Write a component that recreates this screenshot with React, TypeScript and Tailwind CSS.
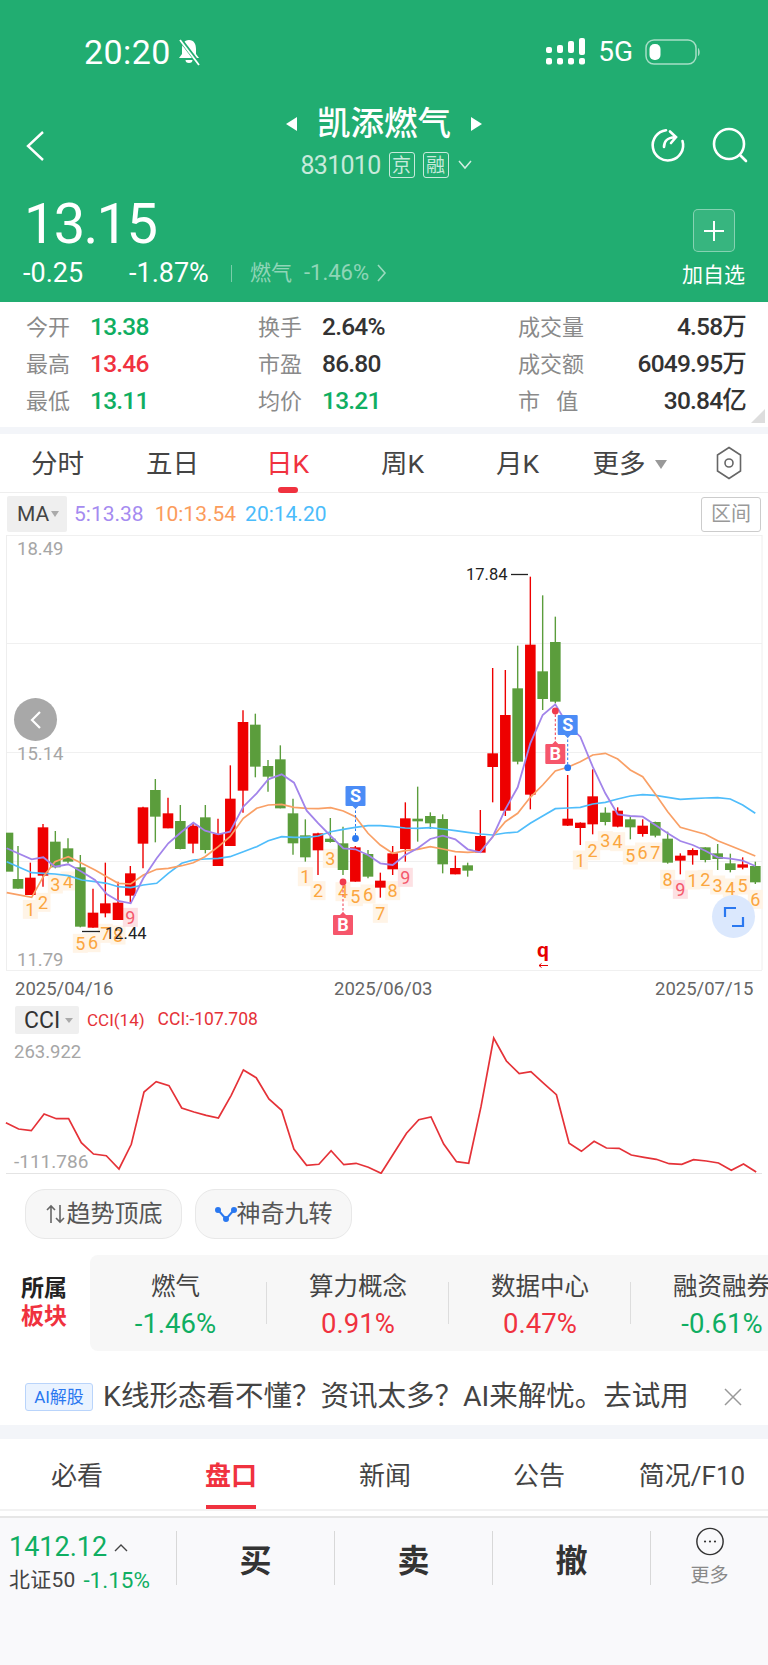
import React from "react";

type C = [number, number, number, number, number, "r" | "g"];
const Z4 = 1152;
const c3: C[] = [
  [24,908,1025,908,1025,"g"],[54,948,1076,1047,1076,"g"],[91,998,1095,1043,1095,"r"],[129,882,1070,892,1037,"r"],[166,903,1015,935,1012,"g"],[204,925,1000,955,995,"g"],[241,975,1192,1012,1190,"g"],[279,1076,1193,1148,1193,"r"],[316,998,1162,1120,1150,"r"],[354,1055,1170,1118,1170,"r"],[391,1008,1118,1030,1097,"r"],[429,830,1015,832,941,"r"],[466,747,937,780,860,"g"],[504,803,895,850,895,"r"],[541,825,958,873,957,"g"],[579,880,970,887,941,"r"],[616,825,970,862,960,"g"],[654,866,1008,912,1008,"r"],[691,706,948,806,948,"r"],[729,541,848,576,782,"r"],[766,551,742,584,710,"g"],[804,690,785,708,740,"g"],[841,646,835,688,835,"g"],[879,806,974,850,940,"g"],[916,868,995,916,982,"g"],[954,908,1035,910,961,"r"],[991,864,938,926,936,"g"],[1029,890,1035,940,1020,"g"],[1066,948,1055,952,1055,"r"],[1104,960,1045,972,1040,"g"],[1141,1028,1103,1052,1073,"r"],
];
const c4: C[] = [
  [26,948,1035,970,1018,"r"],[64,817,995,865,957,"r"],[101,770,935,866,874,"g"],[139,847,897,858,880,"g"],[176,853,1030,867,1003,"g"],[214,977,1033,1014,1033,"r"],[251,998,1040,1006,1022,"g"],[289,840,968,918,968,"r"],[326,414,817,670,711,"r"],[364,420,858,555,842,"r"],[401,347,703,475,695,"g"],[439,140,838,344,794,"r"],[476,196,540,424,507,"g"],[514,260,520,336,515,"g"],[551,735,888,866,887,"r"],[589,877,945,878,894,"r"],[626,718,913,799,883,"r"],[664,832,886,848,876,"g"],[701,832,892,842,890,"r"],[739,860,928,868,892,"g"],[776,868,920,887,912,"r"],[814,875,922,876,917,"g"],[851,905,1001,926,998,"g"],[889,970,1033,977,992,"r"],[926,955,1004,960,976,"r"],[964,952,997,952,990,"g"],[1001,942,1020,970,987,"g"],[1039,971,1027,1000,1020,"g"],[1076,982,1018,1003,1013,"r"],[1114,995,1062,1008,1057,"g"],
];
const candles: C[] = [...c3, ...c4.map((c) => [c[0] + Z4, c[1], c[2], c[3], c[4], c[5]] as C)];

const px = (z: number) => z / 3;
const py = (z: number) => z / 3 - 5;
const line = (a: number[], b: number[]) => {
  const all = [...a, ...b.map((v, i) => (i % 2 === 0 ? v + Z4 : v))];
  const out: string[] = [];
  for (let i = 0; i < all.length; i += 2) out.push(`${px(all[i]).toFixed(1)},${py(all[i + 1]).toFixed(1)}`);
  return out.join(" ");
};

const purple = line(
  [20,955,95,988,130,982,165,1010,205,1003,245,1025,285,1050,320,1092,355,1113,392,1120,430,1045,470,985,505,940,545,905,580,878,615,902,655,913,690,905,730,830,770,790,805,748,845,733,882,758,920,842,955,880,992,918,1030,955,1066,958,1104,975,1141,1000],
  [26,1005,64,975,101,955,139,927,176,917,214,928,251,958,289,967,326,920,364,838,401,772,439,640,476,555,514,523,551,585,589,620,626,710,664,790,701,853,739,858,776,860,814,885,851,910,889,933,926,945,964,962,1001,982,1039,986,1076,992,1114,1008]
);
const orange = line(
  [20,1088,95,1102,130,1040,165,995,205,980,245,1000,285,1020,320,1040,355,1060,392,1062,430,1035,470,1018,505,1015,545,1007,580,998,615,980,655,950,690,920,730,865,770,835,805,825,845,823,882,832,920,835,955,836,992,833,1030,843,1066,860,1104,910,1141,945],
  [26,970,64,962,101,958,139,950,176,957,214,965,251,967,289,965,326,920,364,875,401,850,439,802,476,765,514,723,551,712,589,695,626,675,664,670,701,687,739,720,776,740,814,792,851,845,889,892,926,902,964,913,1001,932,1039,947,1076,962,1114,978]
);
const blue = line(
  [20,995,95,1028,130,1030,165,1032,205,1037,245,1050,285,1055,320,1060,355,1070,392,1073,430,1065,470,1060,505,1030,545,1000,580,990,615,987,655,985,690,980,730,965,770,950,805,932,845,920,882,922,920,922,955,918,992,905,1030,898,1066,892,1104,887,1141,887],
  [26,890,64,894,101,895,139,893,176,897,214,902,251,907,289,912,326,915,364,909,401,906,439,880,476,858,514,836,551,834,589,832,626,822,664,817,701,807,739,798,776,794,814,796,851,802,889,808,926,806,964,804,1001,803,1039,807,1076,825,1114,850]
);

const seq: [string, number, number][] = [
  ["1",91,1138],["2",129,1117],["3",166,1062],["4",204,1053],["5",241,1240],["6",279,1238],["7",316,1210],["8",354,1215],["9",391,1162],
  ["1",916,1040],["2",954,1082],["3",991,985],["4",1029,1085],["5",1066,1100],["6",1104,1092],["7",1141,1150],["8",26+Z4,1082],["9",64+Z4,1042],
  ["1",589+Z4,990],["2",626+Z4,962],["3",664+Z4,932],["4",701+Z4,935],["5",739+Z4,975],["6",776+Z4,966],["7",814+Z4,966],["8",851+Z4,1048],["9",889+Z4,1078],
  ["1",926+Z4,1050],["2",964+Z4,1048],["3",1001+Z4,1065],["4",1039+Z4,1074],["5",1076+Z4,1065],["6",1114+Z4,1108],
];

const cciPts: number[] = [12,398,38,417,64,422,90,372,115,386,140,386,166,458,191,492,217,497,243,537,268,463,294,306,319,275,345,287,371,354,396,366,421,376,446,384,472,316,497,240,523,263,549,327,575,361,600,477,626,526,651,523,676,482,702,524,727,520,752,532,778,550,804,490,830,430,855,389,880,381,906,462,932,515,957,520,982,350,1008,144,1034,213,1060,251,1084,245,1110,280,1136,314,1162,460,1187,484,1213,454,1238,474,1264,475,1289,495,1315,502,1340,508,1366,521,1392,523,1416,509,1442,513,1467,519,1493,541,1518,522,1544,546];
const cci = (() => {
  const o: string[] = [];
  for (let i = 0; i < cciPts.length; i += 2) o.push(`${(cciPts[i] / 2.0417).toFixed(1)},${(cciPts[i + 1] / 3 - 12).toFixed(1)}`);
  return o.join(" ");
})();

function Marker({ kind, x, y, dx, dy }: { kind: "S" | "B"; x: number; y: number; dx: number; dy: number }) {
  const col = kind === "S" ? "#4b8cf6" : "#f6566b";
  const dot = kind === "S" ? "#2a78f0" : "#f03a4c";
  const up = kind === "B";
  return (
    <g>
      <line x1={x} x2={dx} y1={up ? y : y + 20} y2={dy} stroke={dot} strokeWidth="1" strokeDasharray="2.5 2" />
      <circle cx={dx} cy={dy} r="3.4" fill={dot} />
      <rect x={x - 10} y={y} width="20" height="20" rx="1" fill={col} />
      <polygon points={up ? `${x - 3},${y} ${x + 3},${y} ${x},${y - 3}` : `${x - 3},${y + 20} ${x + 3},${y + 20} ${x},${y + 23}`} fill={col} />
      <text x={x} y={y + 16} textAnchor="middle" fontSize="18" fontWeight="700" fill="#fff">{kind}</text>
    </g>
  );
}

function KChart() {
  return (
    <svg width="768" height="467" viewBox="0 0 768 467" className="block">
      {[0, 108, 217, 326, 435].map((y) => (
        <line key={y} x1="6" x2="762" y1={y + 0.5} y2={y + 0.5} stroke="#f0f0f0" strokeWidth="1" />
      ))}
      <line x1="6.5" x2="6.5" y1="0" y2="435" stroke="#eeeeee" />
      <line x1="762" x2="762" y1="0" y2="435" stroke="#eeeeee" />
      <g fontSize="18.5" fill="#a6a6a6">
        <text x="17" y="20">18.49</text>
        <text x="17" y="225">15.14</text>
        <text x="17" y="431">11.79</text>
      </g>
      {seq.map(([t, x, y], i) => {
        const pink = t === "9";
        return (
          <g key={i}>
            <rect x={px(x) - 7.5} y={py(y) - 9.5} width="15" height="19" fill={pink ? "#fde0e3" : "#fff4e6"} />
            <text x={px(x)} y={py(y) + 6.5} textAnchor="middle" fontSize="18" fill={pink ? "#f4596c" : "#fba63f"}>{t}</text>
          </g>
        );
      })}
      {candles.map(([x, wt, wb, bt, bb, c], i) => {
        const col = c === "r" ? "#ee0000" : "#5b9d3c";
        const l = Math.max(px(x) - 5.3, 6);
        const r = px(x) + 5.3;
        return (
          <g key={i}>
            {i > 0 && <line x1={px(x)} x2={px(x)} y1={py(wt)} y2={py(wb)} stroke={col} strokeWidth="1.4" />}
            <rect x={l} y={py(bt)} width={r - l} height={Math.max(py(bb) - py(bt), 2)} fill={col} />
          </g>
        );
      })}
      <polyline points={blue} fill="none" stroke="#4fbdfb" strokeWidth="1.7" />
      <polyline points={orange} fill="none" stroke="#f9a066" strokeWidth="1.7" />
      <polyline points={purple} fill="none" stroke="#a284ea" strokeWidth="1.8" />
      <Marker kind="S" x={355.5} y={251} dx={355.5} dy={303.5} />
      <Marker kind="B" x={343} y={380} dx={343} dy={347} />
      <Marker kind="B" x={555.3} y={209} dx={555.3} dy={176} />
      <Marker kind="S" x={567.7} y={180} dx={567.7} dy={232.7} />
      <text x="466" y="45" fontSize="16.5" fill="#222">17.84</text>
      <line x1="511" x2="528" y1="39.5" y2="39.5" stroke="#222" strokeWidth="1.3" />
      <line x1="82" x2="100" y1="396.5" y2="396.5" stroke="#222" strokeWidth="1.3" />
      <text x="105" y="404" fontSize="16.5" fill="#222">12.44</text>
      <text x="543" y="422" textAnchor="middle" fontSize="21" fontWeight="700" fill="#e60000">q</text>
      <path d="M548 430.5H539M539 430.5l2.5-2M539 430.5l2.5 2" fill="none" stroke="#e60000" strokeWidth="1" />
      <g fontSize="18.5" fill="#666">
        <text x="15" y="460">2025/04/16</text>
        <text x="334" y="460">2025/06/03</text>
        <text x="655" y="460">2025/07/15</text>
      </g>
    </svg>
  );
}

function Signal() {
  const tops = [[47, 53], [45, 53], [41, 53], [38, 55]];
  return (
    <svg width="42" height="30" viewBox="0 0 42 30" className="block">
      {tops.map(([a, b], i) => (
        <g key={i} fill="#fff">
          <rect x={1 + i * 11} y={a - 37} width="6" height={b - a} rx="2" />
          <rect x={1 + i * 11} y="21" width="6" height="6.5" rx="2" />
        </g>
      ))}
    </svg>
  );
}

function Stat({ label, value, color, right }: { label: string; value: string; color: string; right?: boolean }) {
  return (
    <div className={`flex items-center h-[37px] ${right ? "justify-between" : ""}`}>
      <span className="text-[22px] text-[#8a8a8a] whitespace-pre leading-none">{label}</span>
      <span className={`text-[24.5px] tracking-[-0.8px] font-medium leading-none ${right ? "" : "ml-[20px]"} ${color}`}>{value}</span>
    </div>
  );
}

export default function App() {
  return (
    <div className="w-[768px] h-[1665px] bg-white overflow-hidden font-['Roboto','Noto_Sans_CJK_SC',sans-serif]">
      <header className="h-[302px] bg-[#21ad71] text-white flex flex-col">
        <div className="h-[104px] flex items-center pl-[84px] pr-[67px]">
          <span className="text-[34px] leading-none tracking-[0.4px]">20:20</span>
          <svg width="28" height="28" viewBox="0 0 28 28" className="ml-[4px]" fill="#fff">
            <path d="M14 2c-5 0-7 4-7 9v5l-3 4h20l-3-4v-5c0-5-2-9-7-9z" />
            <path d="M10.5 22a3.5 3 0 0 0 7 0z" />
            <path d="M5 1l19 25" stroke="#21ad71" strokeWidth="4" />
            <path d="M5 2l19 25" stroke="#fff" strokeWidth="1.8" />
          </svg>
          <div className="ml-auto flex items-center">
            <Signal />
            <span className="text-[28px] leading-none ml-[11px]">5G</span>
            <svg width="56" height="26" viewBox="0 0 56 26" className="ml-[12px]">
              <rect x="1" y="1" width="50" height="24" rx="8" fill="none" stroke="#ffffff" strokeOpacity="0.6" strokeWidth="1.5" />
              <rect x="4.5" y="5" width="11" height="16" rx="5" fill="#fff" />
              <path d="M53 9c2 1 2.5 7 0 8z" fill="#fff" fillOpacity="0.6" />
            </svg>
          </div>
        </div>
        <div className="h-[80px] grid grid-cols-[1fr_auto_1fr]">
          <div className="pl-[24px] pt-[26px]">
            <svg width="22" height="32" viewBox="0 0 22 32" fill="none" stroke="#fff" strokeWidth="2.4">
              <path d="M19 2L4 16l15 14" />
            </svg>
          </div>
          <div className="flex flex-col items-center">
            <div className="flex items-center h-[40px] gap-[20px]">
              <span className="w-0 h-0 border-y-[7px] border-y-transparent border-r-[11px] border-r-white" />
              <span className="text-[33.5px] font-medium leading-none">凯添燃气</span>
              <span className="w-0 h-0 border-y-[7px] border-y-transparent border-l-[11px] border-l-white" />
            </div>
            <div className="flex items-center mt-[8px] pl-[5px] text-white/75">
              <span className="text-[25px] tracking-[-0.7px] leading-none">831010</span>
              <span className="ml-[8px] w-[26px] h-[26px] border border-white/75 rounded-[3px] text-[19px] leading-none flex items-center justify-center">京</span>
              <span className="ml-[8px] w-[26px] h-[26px] border border-white/75 rounded-[3px] text-[19px] leading-none flex items-center justify-center">融</span>
              <svg width="16" height="10" viewBox="0 0 16 10" className="ml-[8px]" fill="none" stroke="#fff" strokeOpacity="0.8" strokeWidth="1.5">
                <path d="M2 1l6 7 6-7" />
              </svg>
            </div>
          </div>
          <div className="flex justify-end items-start pt-[22px] pr-[19px] gap-[25px]">
            <svg width="38" height="38" viewBox="0 0 38 38" fill="none" stroke="#fff" strokeWidth="2.6" strokeLinecap="round">
              <path d="M18 4.2A15.2 15.2 0 1 0 34.5 15" />
              <path d="M16 21c0-6 3-9 11-10M22 5.5L28 11l-5 6" />
            </svg>
            <svg width="38" height="38" viewBox="0 0 38 38" fill="none" stroke="#fff" strokeWidth="2.6" strokeLinecap="round">
              <circle cx="18" cy="18" r="15" />
              <path d="M29 29l6 6" />
            </svg>
          </div>
        </div>
        <div className="flex-1 flex justify-between pl-[23px] pr-[23px]">
          <div className="flex flex-col">
            <div className="text-[56px] leading-none h-[60px] pl-[1px] pt-[12px] tracking-[-1.7px]">13.15</div>
            <div className="flex items-center mt-[14px] h-[30px] ">
              <span className="text-[27px] leading-none w-[106px]">-0.25</span>
              <span className="text-[27px] leading-none w-[102px]">-1.87%</span>
              <span className="w-px h-[17px] bg-white/40" />
              <span className="ml-[18px] text-[21px] leading-none text-white/50">燃气</span>
              <span className="ml-[12px] text-[22px] leading-none text-white/50">-1.46%</span>
              <svg width="10" height="18" viewBox="0 0 10 18" className="ml-[8px]" fill="none" stroke="#fff" strokeOpacity="0.55" strokeWidth="1.6">
                <path d="M1 1l7 8-7 8" />
              </svg>
            </div>
          </div>
          <div className="flex flex-col items-center pt-[25px]">
            <div className="w-[42px] h-[43px] rounded-[5px] bg-white/10 border border-white/40 flex items-center justify-center">
              <svg width="22" height="22" viewBox="0 0 22 22" stroke="#fff" strokeWidth="2">
                <path d="M11 1v20M1 11h20" />
              </svg>
            </div>
            <span className="text-[21px] leading-none mt-[13px]">加自选</span>
          </div>
        </div>
      </header>

      <section className="h-[125px] pt-[7px] pl-[26px] pr-[22px] grid grid-cols-[232px_260px_1fr] relative">
        <div>
          <Stat label="今开" value="13.38" color="text-[#0fae62]" />
          <Stat label="最高" value="13.46" color="text-[#f0323f]" />
          <Stat label="最低" value="13.11" color="text-[#0fae62]" />
        </div>
        <div>
          <Stat label="换手" value="2.64%" color="text-[#333]" />
          <Stat label="市盈" value="86.80" color="text-[#333]" />
          <Stat label="均价" value="13.21" color="text-[#0fae62]" />
        </div>
        <div>
          <Stat right label="成交量" value="4.58万" color="text-[#333]" />
          <Stat right label="成交额" value="6049.95万" color="text-[#333]" />
          <Stat right label={"市   值"} value="30.84亿" color="text-[#333]" />
        </div>
        <svg width="14" height="14" viewBox="0 0 14 14" className="absolute right-[3px] bottom-[4px]">
          <polygon points="14,0 14,14 0,14" fill="#dddddd" />
        </svg>
      </section>
      <div className="h-[7px] bg-[#f3f5f9]" />

      <nav className="h-[59px] flex items-center border-b border-[#eeeeee] relative text-[26.5px] text-[#444] pt-[3px]">
        <div className="w-[115px] text-center leading-none">分时</div>
        <div className="w-[115px] text-center leading-none">五日</div>
        <div className="w-[115px] -mt-[3px] pt-[3px] text-center leading-none text-[#f0323f] relative h-[59px] flex items-center justify-center">
          日K
          <span className="absolute left-[48px] bottom-0 w-[20px] h-[6px] rounded-full bg-[#f0323f]" />
        </div>
        <div className="w-[115px] text-center leading-none">周K</div>
        <div className="w-[115px] text-center leading-none">月K</div>
        <div className="w-[115px] flex items-center justify-center leading-none pr-[6px]">
          更多
          <span className="ml-[9px] w-0 h-0 border-x-[6.5px] border-x-transparent border-t-[9px] border-t-[#999]" />
        </div>
        <svg width="26" height="34" viewBox="0 0 26 34" className="ml-[26px] -mt-[3px]" fill="none" stroke="#666" strokeWidth="1.6">
          <path d="M13 1.5L24.5 9v16L13 32.5 1.5 25V9z" />
          <circle cx="13" cy="17" r="4" />
        </svg>
      </nav>

      <div className="h-[42px] flex items-center pl-[7px] pr-[7px] text-[21px]">
        <div className="w-[60px] h-[36px] bg-[#efefef] rounded-[2px] flex items-center pl-[10px] text-[#444] leading-none">
          MA
          <span className="ml-[2px] w-0 h-0 border-x-[4px] border-x-transparent border-t-[6px] border-t-[#aaa]" />
        </div>
        <span className="ml-[7px] text-[#a58bf0] leading-none">5:13.38</span>
        <span className="ml-[11px] text-[#fb9c5c] leading-none">10:13.54</span>
        <span className="ml-[9px] text-[#4bbcfb] leading-none">20:14.20</span>
        <div className="ml-auto w-[60px] h-[35px] border border-[#cccccc] rounded-[3px] flex items-center justify-center text-[20px] text-[#999] leading-none">区间</div>
      </div>

      <div className="relative h-[467px]">
        <KChart />
        <div className="absolute left-[14px] top-[163px] w-[43px] h-[43px] rounded-full bg-[#a8a8a8] flex items-center justify-center">
          <svg width="14" height="20" viewBox="0 0 14 20" fill="none" stroke="#fff" strokeWidth="2.2">
            <path d="M11 2L3 10l8 8" />
          </svg>
        </div>
        <div className="absolute left-[712px] top-[360px] w-[43px] h-[43px] rounded-full bg-[#dbe8fd] flex items-center justify-center">
          <svg width="22" height="22" viewBox="0 0 22 22" fill="none" stroke="#2a78f0" strokeWidth="2.2">
            <path d="M2 11V2h11M20 11v9H9" />
          </svg>
        </div>
      </div>

      <div className="relative h-[172px]">
        <svg width="768" height="172" viewBox="0 0 768 172" className="block">
          <line x1="6" x2="762" y1="171.5" y2="171.5" stroke="#e4e4e4" />
          <polyline points={cci} fill="none" stroke="#e53238" strokeWidth="1.7" />
          <text x="14" y="56" fontSize="18.5" fill="#a6a6a6">263.922</text>
          <text x="14" y="166" fontSize="19" fill="#a6a6a6">-111.786</text>
        </svg>
        <div className="absolute left-[15px] top-[4px] flex items-center">
          <div className="w-[64px] h-[28px] bg-[#efefef] rounded-[2px] flex items-center pl-[9px] text-[23px] text-[#333] leading-none">
            CCI
            <span className="ml-[5px] w-0 h-0 border-x-[4px] border-x-transparent border-t-[5px] border-t-[#aaa]" />
          </div>
          <span className="ml-[8px] text-[17px] text-[#e53238] leading-none">CCI(14)</span>
          <span className="ml-[13px] text-[17.5px] text-[#e53238] leading-none">CCI:-107.708</span>
        </div>
      </div>

      <div className="h-[81px] pt-[15px] pl-[25px] flex gap-[13px] items-start">
        <div className="w-[157px] h-[50px] rounded-[20px] bg-[#f7f7f7] border border-[#e8e8e8] flex items-center justify-center text-[24px] text-[#555] leading-none">
          <svg width="22" height="24" viewBox="0 0 22 24" fill="none" stroke="#666" strokeWidth="1.6">
            <path d="M6 21V4M2 8l4-4 4 4M15 3v17M11 16l4 4 4-4" />
          </svg>
          趋势顶底
        </div>
        <div className="w-[157px] h-[50px] rounded-[20px] bg-[#f7f7f7] border border-[#e8e8e8] flex items-center justify-center text-[24px] text-[#555] leading-none">
          <svg width="22" height="20" viewBox="0 0 22 20" fill="none" stroke="#2a78f0" strokeWidth="2">
            <path d="M3 6l8 9 8-9" />
            <circle cx="3" cy="6" r="2" fill="#2a78f0" />
            <circle cx="11" cy="15" r="2" fill="#2a78f0" />
            <circle cx="19" cy="6" r="2" fill="#2a78f0" />
          </svg>
          神奇九转
        </div>
      </div>

      <div className="h-[96px] flex">
        <div className="w-[90px] pl-[21px] pt-[20px] text-[23px] font-bold leading-[28px]">
          <div className="text-[#222]">所属</div>
          <div className="text-[#f0323f]">板块</div>
        </div>
        <div className="flex-1 flex bg-[#f7f7f7] rounded-l-[8px] overflow-hidden pt-[20px]">
          {[
            ["燃气", "-1.46%", "text-[#0fae62]", "w-[177px] pr-[6px]"],
            ["算力概念", "0.91%", "text-[#f0323f]", "w-[182px]"],
            ["数据中心", "0.47%", "text-[#f0323f]", "w-[182px]"],
            ["融资融券", "-0.61%", "text-[#0fae62]", "w-[182px]"],
          ].map(([n, v, c, w], i) => (
            <div key={n} className={`relative ${w} shrink-0 flex flex-col items-center whitespace-nowrap`}>
              <span className="text-[24.5px] text-[#444] leading-none">{n}</span>
              <span className={`text-[27.5px] leading-none mt-[10px] ${c}`}>{v}</span>
              {i < 3 && <span className="absolute right-0 top-[7px] w-px h-[42px] bg-[#dddddd]" />}
            </div>
          ))}
        </div>
      </div>

      <div className="h-[74px] flex items-start pt-[32px] pl-[25px] pr-[26px]">
        <span className="w-[68px] h-[28px] rounded-[3px] border border-[#b9d4fb] bg-[#eaf3ff] text-[#2a78f0] text-[17px] leading-none flex items-center justify-center">AI解股</span>
        <span className="ml-[10px] text-[28.5px] text-[#444] leading-[28px] whitespace-nowrap">K线形态看不懂？资讯太多？AI来解忧。去试用</span>
        <svg width="18" height="18" viewBox="0 0 18 18" className="ml-auto mt-[5px]" stroke="#999" strokeWidth="1.5">
          <path d="M1 1l16 16M17 1L1 17" />
        </svg>
      </div>
      <div className="h-[14px] bg-[#f3f5f9]" />

      <nav className="h-[70px] flex items-center text-[26px] text-[#444] pt-[3px]">
        <div className="w-[154px] text-center leading-none">必看</div>
        <div className="w-[154px] h-[70px] -mt-[3px] pt-[3px] text-center relative flex items-center justify-center text-[#f0323f] font-bold leading-none">
          盘口
          <span className="absolute left-[52px] bottom-0 w-[50px] h-[4px] bg-[#f0323f]" />
        </div>
        <div className="w-[154px] text-center leading-none">新闻</div>
        <div className="w-[154px] text-center leading-none">公告</div>
        <div className="w-[152px] text-center leading-none">简况/F10</div>
      </nav>
      <div className="h-[2px] bg-[#f2f2f2]" />
      <div className="h-[5px]" />
      <footer className="h-[149px] bg-[#f9f9fb] border-t-2 border-[#e6e6e6] flex items-start pt-[13px]">
        <div className="w-[176px] h-[54px] pl-[9px] pt-[3px] flex flex-col">
          <div className="flex items-center">
            <span className="text-[27px] text-[#0fae62] leading-none">1412.12</span>
            <svg width="14" height="10" viewBox="0 0 14 10" className="ml-[7px]" fill="none" stroke="#444" strokeWidth="1.4">
              <path d="M1 8l6-6 6 6" />
            </svg>
          </div>
          <div className="flex items-center mt-[8px] leading-none whitespace-nowrap">
            <span className="text-[21px] tracking-[0.2px] text-[#444]">北证50</span>
            <span className="ml-[8px] text-[22.5px] text-[#0fae62]">-1.15%</span>
          </div>
        </div>
        {["买", "卖", "撤"].map((t) => (
          <div key={t} className="w-[158px] h-[54px] border-l border-[#d8d8d8] flex items-center justify-center text-[32px] font-bold text-[#333] leading-none pt-[6px]">
            {t}
          </div>
        ))}
        <div className="flex-1 h-[54px] border-l border-[#d8d8d8] flex flex-col items-center">
          <svg width="32" height="32" viewBox="0 0 32 32" className="-mt-[4px]" fill="none" stroke="#333" strokeWidth="1.6">
            <circle cx="16" cy="16" r="14.5" />
            <circle cx="10.5" cy="16" r="1.2" fill="#333" stroke="none" />
            <circle cx="16" cy="16" r="1.2" fill="#333" stroke="none" />
            <circle cx="21.5" cy="16" r="1.2" fill="#333" stroke="none" />
          </svg>
          <span className="text-[19px] text-[#888] leading-none mt-[10px]">更多</span>
        </div>
      </footer>
    </div>
  );
}
